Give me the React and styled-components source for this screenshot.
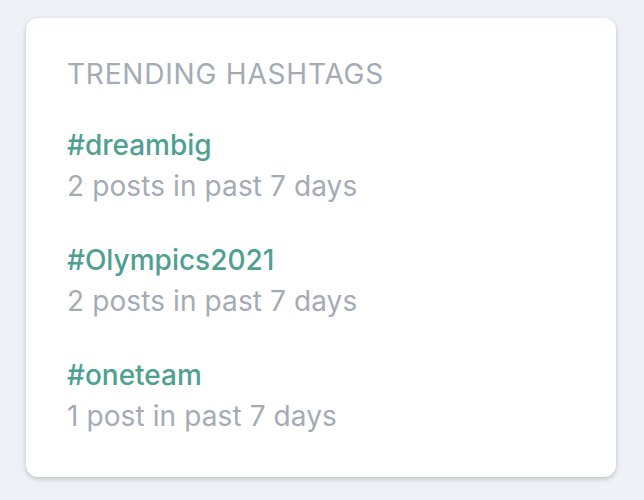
import React from "react";
import styled, { createGlobalStyle } from "styled-components";

const Global = createGlobalStyle`
  html, body { margin: 0; padding: 0; background: #eef1f5; }
  body { font-family: Inter, "Noto Sans", sans-serif; -webkit-font-smoothing: antialiased; }
`;

const Page = styled.div`
  padding: 18px 28px 22px 26px;
`;

const Card = styled.section`
  background: #ffffff;
  border-radius: 12px;
  box-shadow: 0 2px 5px rgba(0, 0, 0, 0.2);
  padding: 36px 41px 41px;
  display: flex;
  flex-direction: column;
  gap: 31px;
`;

const Title = styled.h2`
  margin: 0;
  font-size: 28px;
  font-weight: 400;
  letter-spacing: 0.8px;
  color: #a5abb4;
  text-transform: uppercase;
  line-height: 40px;
`;

const List = styled.ul`
  list-style: none;
  margin: 0;
  padding: 0;
  display: flex;
  flex-direction: column;
  gap: 34px;
`;

const Item = styled.li`
  display: flex;
  flex-direction: column;
  gap: 1px;
`;

const Tag = styled.a`
  font-size: 28px;
  font-weight: 500;
  color: #4fa091;
  text-decoration: none;
  line-height: 40px;
`;

const Meta = styled.span`
  font-size: 28px;
  font-weight: 400;
  color: #a5abb4;
  line-height: 40px;
  letter-spacing: 0.1px;
`;

const tags = [
  { name: "#dreambig", count: 2 },
  { name: "#Olympics2021", count: 2 },
  { name: "#oneteam", count: 1 },
];

export default function App() {
  return (
    <>
      <Global />
      <Page>
        <Card>
          <Title>Trending Hashtags</Title>
          <List>
            {tags.map((t) => (
              <Item key={t.name}>
                <Tag href="#">{t.name}</Tag>
                <Meta>
                  {t.count} {t.count === 1 ? "post" : "posts"} in past 7 days
                </Meta>
              </Item>
            ))}
          </List>
        </Card>
      </Page>
    </>
  );
}
